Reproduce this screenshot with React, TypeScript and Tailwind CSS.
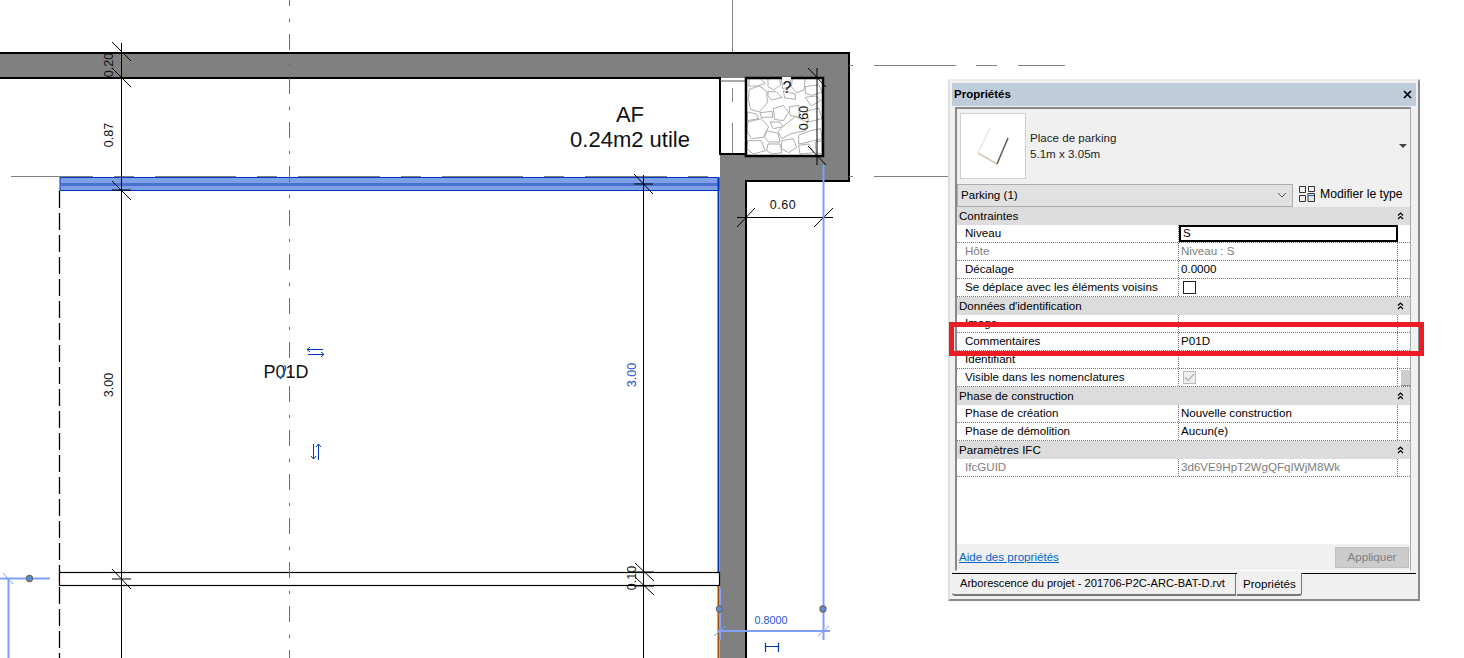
import React from 'react';

const cobbles = [
  '28,52 58,42 80,58 82,92 58,120 32,112 25,82',
  '28,20 60,18 76,34 52,42 26,42',
  '84,20 118,18 122,38 102,54 84,44',
  '84,58 110,60 126,76 96,84 84,72',
  '158,18 196,18 192,54 170,62 154,44',
  '196,44 236,38 246,60 216,70 196,64',
  '130,56 166,66 166,82 134,78',
  '196,76 226,72 242,86 214,102',
  '100,110 130,100 146,120 130,146 104,142',
  '60,122 96,118 98,136 64,136',
  '148,104 176,100 178,136 150,130',
  '24,150 64,140 86,164 70,196 34,200 20,174',
  '90,150 120,150 130,164 100,170',
  '126,166 166,134 202,150 196,176 150,186 126,200 114,180',
  '200,118 236,108 246,140 206,150',
  '80,176 114,184 120,210 86,210 74,196',
  '24,206 64,206 76,236 40,246 20,230',
  '126,206 160,200 170,226 146,242 124,230',
  '176,190 210,176 242,170 246,200 206,210 176,216',
  '176,220 206,216 222,242 180,246',
  '84,216 120,216 126,242 96,246 80,236',
  '226,210 246,206 246,246 228,242',
  '124,18 152,18 152,44 128,50',
  '22,120 50,126 56,140 22,146',
];

// black dimension ticks: x1 y1 x2 y2
const ticks = [
  [112, 42, 131, 61],
  [112, 68, 131, 87],
  [112, 181, 131, 200],
  [112, 190, 131, 190],
  [634, 174, 653, 194],
  [634, 184, 653, 184],
  [112, 569, 131, 589],
  [112, 579, 131, 579],
  [635, 563, 654, 581],
  [635, 577, 654, 595],
  [634, 572, 654, 572],
  [634, 586, 654, 586],
  [808, 68, 826, 87],
  [808, 146, 826, 165],
  [737, 227, 755, 208],
  [814, 227, 833, 208],
];

const Drawing = () => (
  <svg width="1464" height="658" viewBox="0 0 1464 658" className="block" style={{ fontFamily: '"Liberation Sans", Arial, sans-serif' }}>
    {/* walls */}
    <path d="M0 53H849V181H746V658H720V154H746V78H0Z" fill="#808080" />
    <path d="M0 53H849V181H746V658M0 78H720V154H746" fill="none" stroke="#000" strokeWidth="2" />
    <path d="M720 78V154" stroke="#000" strokeWidth="2" />
    <path d="M720 81H746" stroke="#555" />

    {/* grey hidden lines */}
    <g stroke="#808080" strokeWidth="1">
      <path d="M732.5 0V52M732.5 88V102M732.5 123V153" />
      <path d="M849 65.5H853M874 65.5H956M976 65.5H997M1018 65.5H1065" />
      <path d="M849 176.5H853M874 176.5H950" />
      <path d="M11 176.5H93M114 176.5H134M155 176.5H236M257 176.5H277M298 176.5H380M401 176.5H421M442 176.5H523M544 176.5H564M585 176.5H667M688 176.5H708" />
    </g>

    {/* rubble fill */}
    <rect x="746" y="78" width="77" height="78" fill="#fff" />
    <g transform="translate(740 72) scale(0.3333)" fill="#fff" stroke="#999" strokeWidth="2.4">
      {cobbles.map((p, i) => (
        <polygon key={i} points={p} />
      ))}
    </g>
    <rect x="746" y="78" width="77" height="78" fill="none" stroke="#000" strokeWidth="2.5" />
    <rect x="782" y="77" width="9" height="3" fill="#fff" />
    <text x="787" y="93" fontSize="16" textAnchor="middle" fill="#111">?</text>

    {/* selected parking outline */}
    <rect x="60" y="177.5" width="659" height="13" fill="#7f9fe6" stroke="#0038b8" />
    <rect x="60" y="183" width="659" height="3" fill="#4a70d0" />
    <path d="M718.5 178V572" stroke="#0038b8" strokeWidth="2" />
    <path d="M718.5 586V658" stroke="#a04f00" strokeWidth="2" />
    <path d="M59.5 191V658" stroke="#000" strokeDasharray="17 5" strokeWidth="1.3" />
    <rect x="59.5" y="572.5" width="660" height="13" fill="#fff" stroke="#000" strokeWidth="1.2" />

    {/* axis */}
    <path d="M289.5 -10V658" stroke="#1a7be0" strokeDasharray="16 13 3 12" strokeWidth="1" shapeRendering="crispEdges" />

    {/* dimensions */}
    <g stroke="#000" strokeWidth="1">
      <path d="M121.5 43V658M643.5 175V658M817 68V165M737 217.5H833" fill="none" />
      {ticks.map((t, i) => (
        <line key={i} x1={t[0]} y1={t[1]} x2={t[2]} y2={t[3]} />
      ))}
    </g>
    <g fontSize="12.5" fill="#111" textAnchor="middle">
      <text transform="translate(113 65) rotate(-90)">0.20</text>
      <text transform="translate(113 135) rotate(-90)">0.87</text>
      <text transform="translate(113 385) rotate(-90)">3.00</text>
      <text transform="translate(636 578) rotate(-90)">0.10</text>
      <text transform="translate(808 118) rotate(-90)">0.60</text>
      <text x="783" y="209" letterSpacing="0.5">0.60</text>
    </g>
    <text transform="translate(636 375) rotate(-90)" fontSize="12.5" fill="#2255cc" textAnchor="middle">3.00</text>

    {/* room labels */}
    <text x="630" y="122" fontSize="22" fill="#111" textAnchor="middle">AF</text>
    <text x="630" y="147" fontSize="22" fill="#111" textAnchor="middle">0.24m2 utile</text>
    <text x="286" y="378" fontSize="18" fill="#111" textAnchor="middle">P01D</text>
    <path d="M284 366C287 365 286 372 280 379" fill="none" stroke="#1a5fd0" strokeWidth="1.3" />

    {/* flip controls */}
    <g fill="none" stroke="#0038b8" strokeWidth="1">
      <path d="M307 349.5H323M307 349.5L310 347M307 349.5L310 352M308 354.5H324M324 354.5L321 352M324 354.5L321 357" />
      <path d="M313.5 459V444M313.5 459L311 456M313.5 459L316 456M318.5 460V444M318.5 444L316 447M318.5 444L321 447" />
    </g>

    {/* temporary dimensions */}
    <g stroke="#7fa0ff" fill="none">
      <path d="M823.5 165V640M720 588V640M718 631H830M8.5 578V658M0 578.5H50" strokeWidth="2" />
      <path d="M714 636L726 626M818 636L829 626M3 573L13 584" strokeWidth="1" />
    </g>
    <g fill="#5b8fd9" stroke="#6d6d6d" strokeWidth="1.3">
      <circle cx="719.5" cy="609" r="3" />
      <circle cx="823" cy="609" r="3" />
      <circle cx="29.5" cy="578.5" r="3" />
    </g>
    <text x="771" y="623.5" fontSize="10.8" fill="#2255cc" textAnchor="middle">0.8000</text>
    <path d="M765.5 643V652M778.5 643V652M766 646.5H778" stroke="#0038b8" strokeWidth="1.2" fill="none" />
  </svg>
);

const DoubleUp = () => (
  <svg width="7" height="8" viewBox="0 0 7 8" className="block">
    <path d="M1 3.5L3.5 1L6 3.5M1 7L3.5 4.5L6 7" fill="none" stroke="#000" strokeWidth="1.2" />
  </svg>
);

const Section = ({ title }: { title: string }) => (
  <div className="flex h-[18px] items-center justify-between bg-[#dcdcdc] pl-[2px] pr-[6px]">
    <span>{title}</span>
    <DoubleUp />
  </div>
);

const Row = ({
  label,
  children,
  muted,
  focused,
}: {
  label: string;
  children?: React.ReactNode;
  muted?: boolean;
  focused?: boolean;
}) => (
  <div className={`flex h-[18px] border-b border-dotted border-[#777] bg-white ${muted ? 'text-[#7d7d7d]' : 'text-black'}`}>
    <div className="flex w-[222px] items-center border-r border-dotted border-[#777] pb-px pl-[8px]">{label}</div>
    <div
      className={`flex w-[219px] items-center pb-px pl-[2px] ${focused ? 'border-2 border-black' : 'border-r border-dotted border-[#777]'}`}
    >
      {children}
    </div>
  </div>
);

const PropertiesPanel = () => (
  <div
    className="absolute left-[948px] top-[79px] flex h-[522px] w-[472px] flex-col border-t-2 border-l-2 border-r-2 border-b-2 border-t-[#ececec] border-l-[#dedede] border-r-[#8a8a8a] border-b-[#8a8a8a] bg-[#f0f0f0] text-[11.6px] leading-none text-black"
    style={{ fontFamily: '"Liberation Sans", Arial, sans-serif' }}
  >
    <div className="mx-[2px] mt-[2px] flex h-[23px] items-center justify-between bg-[#bfcddb] pl-[2px] pr-[4px] text-[11.5px] font-bold">
      <span>Propriétés</span>
      <svg width="9" height="9" viewBox="0 0 9 9">
        <path d="M1 1L8 8M8 1L1 8" stroke="#000" strokeWidth="1.7" />
      </svg>
    </div>

    <div className="ml-[5px] mr-[7px] mt-px flex h-[464px] flex-col border-t-2 border-l-2 border-r border-b border-t-[#888] border-l-[#888] border-r-[#aaa] border-b-white">
      {/* type selector */}
      <div className="flex h-[74px] shrink-0 items-center bg-[#f0f0f0] pl-[3px] pr-[2px]">
        <div className="flex h-[66px] w-[66px] items-center justify-center border border-[#d0d0d0] bg-white">
          <svg width="40" height="42" viewBox="0 0 40 42" fill="none">
            <path d="M5 28L17 3" stroke="#dddddd" strokeWidth="1" />
            <path d="M5 28L24 39" stroke="#d9c9b8" strokeWidth="1.5" />
            <path d="M24 39L35 13" stroke="#6a6055" strokeWidth="1.6" />
          </svg>
        </div>
        <div className="ml-[4px] flex flex-col gap-[4px] text-[#222]">
          <span>Place de parking</span>
          <span>5.1m x 3.05m</span>
        </div>
        <svg width="8" height="4" viewBox="0 0 8 4" className="ml-auto mr-[1px]">
          <path d="M0 0H8L4 4Z" fill="#444" />
        </svg>
      </div>

      {/* instance selector */}
      <div className="flex h-[24px] shrink-0 items-center">
        <div className="flex h-[23px] w-[336px] items-center justify-between border border-[#adadad] bg-[#e1e1e1] pl-[3px] pr-[5px]">
          <span>Parking (1)</span>
          <svg width="10" height="6" viewBox="0 0 10 6">
            <path d="M1 1L5 5L9 1" fill="none" stroke="#555" />
          </svg>
        </div>
        <div className="ml-[6px] flex items-center gap-[5px] pb-[2px] text-[12.2px]">
          <svg width="16" height="16" viewBox="0 0 16 16" fill="none" stroke="#333">
            <path d="M.5.5H6.5V6.5H.5ZM.5 9.5H6.5V15.5H.5ZM9.5.5H15.5V5.5H9.5Z" />
            <path d="M9 7.5H15.5V15.5H9Z" fill="#dbe8f5" />
            <path d="M9.5 9.5H15" stroke="#1a5fa0" />
          </svg>
          <span>Modifier le type</span>
        </div>
      </div>

      {/* property grid */}
      <div className="flex shrink-0 flex-col">
        <Section title="Contraintes" />
        <Row label="Niveau" focused>
          S
        </Row>
        <Row label="Hôte" muted>
          Niveau : S
        </Row>
        <Row label="Décalage">0.0000</Row>
        <Row label="Se déplace avec les éléments voisins">
          <span className="ml-[2px] block h-[13px] w-[13px] border border-[#222] bg-white" />
        </Row>
        <Section title="Données d'identification" />
        <Row label="Image" />
        <Row label="Commentaires">P01D</Row>
        <Row label="Identifiant" />
        <div className="relative">
          <Row label="Visible dans les nomenclatures">
            <span className="ml-[2px] flex h-[13px] w-[13px] items-center justify-center border border-[#bbb] bg-[#efefef]">
              <svg width="11" height="9" viewBox="0 0 11 9">
                <path d="M1 4.5L4 7.5L10 1" fill="none" stroke="#b5b5b5" strokeWidth="1.5" />
              </svg>
            </span>
          </Row>
          <div className="absolute left-[444px] top-[1px] h-[16px] w-[9px] border-b border-[#8c8c8c] bg-[#cdcdcd]" />
        </div>
        <Section title="Phase de construction" />
        <Row label="Phase de création">Nouvelle construction</Row>
        <Row label="Phase de démolition">Aucun(e)</Row>
        <Section title="Paramètres IFC" />
        <Row label="IfcGUID" muted>
          3d6VE9HpT2WgQFqIWjM8Wk
        </Row>
      </div>
      <div className="flex-1 bg-white" />

      {/* footer */}
      <div className="flex h-[26px] shrink-0 items-center justify-between bg-[#f0f0f0] pl-[2px] pr-px">
        <span className="text-[#0066cc] underline">Aide des propriétés</span>
        <div className="flex h-[21px] w-[74px] items-center justify-center border border-[#bfbfbf] bg-[#cccccc] text-[#808080]">
          Appliquer
        </div>
      </div>
    </div>

    {/* tabs */}
    <div className="mx-[2px] mt-[2px] flex h-[23px] border-t border-black">
      <div className="flex h-[22px] w-[284px] items-center whitespace-nowrap rounded-bl-[3px] border-b-2 border-r border-[#777] pl-[8px] text-[11.1px]">
        Arborescence du projet - 201706-P2C-ARC-BAT-D.rvt
      </div>
      <div className="-mt-px ml-px flex h-[23px] w-[65px] items-center whitespace-nowrap rounded-br-[3px] border-b-2 border-r border-[#777] bg-[#f0f0f0] pl-[6px]">
        Propriétés
      </div>
    </div>
  </div>
);

export default function App() {
  return (
    <div className="relative h-[658px] w-[1464px] overflow-hidden bg-white">
      <Drawing />
      <PropertiesPanel />
      {/* red highlight */}
      <div className="absolute left-[949px] top-[322px] h-[34px] w-[475px] border-[5px] border-[#ed1c24]" />
    </div>
  );
}
